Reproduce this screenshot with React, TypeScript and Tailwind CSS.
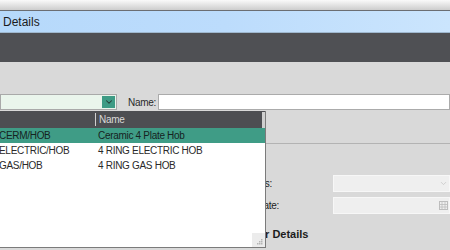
import React from "react";
import { ChevronDown } from "lucide-react";

const rows = [
  { code: "CERM/HOB", name: "Ceramic 4 Plate Hob", selected: true },
  { code: "ELECTRIC/HOB", name: "4 RING ELECTRIC HOB", selected: false },
  { code: "GAS/HOB", name: "4 RING GAS HOB", selected: false },
];

const CalendarIcon = () => (
  <svg width="9" height="9" viewBox="0 0 9 9" className="text-[#bdbdbd]">
    <rect x="0.5" y="0.5" width="8" height="8" fill="none" stroke="currentColor" />
    <path d="M0.5 3.5h8M0.5 6h8M3 0.5v8M6 0.5v8" stroke="currentColor" strokeWidth="0.8" />
  </svg>
);

const App: React.FC = () => {
  return (
    <div className="relative w-[450px] h-[250px] overflow-hidden bg-[#d9d9d9] font-['Liberation_Sans',Arial,sans-serif] text-[10px] tracking-[-0.3px] text-[#222]">
      {/* window chrome */}
      <div className="h-[10px] bg-gradient-to-b from-[#fafafa] to-[#cdcdcd]" />
      <div className="h-[1px] bg-[#6b6e73]" />
      <div className="h-[22px] flex items-center pl-[3px] bg-gradient-to-r from-[#b6d9fb] via-[#bcdcfc] to-[#cbe5fd] border-b border-[#9fb8cf] text-[12px] tracking-normal text-[#1b1b1b]">
        Details
      </div>
      <div className="h-[29px] bg-[#4f5054]" />

      {/* form */}
      <div className="pt-[32px]">
        <div className="flex items-center h-[16px]">
          <div className="w-[117px] shrink-0 h-full bg-[#eaf5ec] border border-[#a9a9a9] flex items-center justify-end pr-[1px]">
            <div className="w-[13px] h-[12px] bg-[#3e9b85] flex items-center justify-center">
              <ChevronDown size={10} strokeWidth={2.5} className="text-[#253b35]" />
            </div>
          </div>
          <span className="ml-[11px] w-[30px] shrink-0 whitespace-nowrap text-[#2a2a2a]">Name:</span>
          <div className="flex-1 h-full bg-white border border-[#ababab]" />
        </div>

        <div className="ml-[266px] mt-[33px] border-t border-[#b3b3b3]" />

        <div className="mt-[31px] flex flex-col gap-[5px]">
          <div className="flex items-center h-[17px]">
            <span className="w-[333px] shrink-0 whitespace-nowrap pl-[243px]">Status:</span>
            <div className="flex-1 h-full bg-[#efefef] border border-[#f7f7f7] flex items-center justify-end pr-[1px]">
              <ChevronDown size={9} className="text-[#c4c4c4]" />
            </div>
          </div>
          <div className="flex items-center h-[17px]">
            <span className="w-[333px] shrink-0 whitespace-nowrap pl-[230px]">Install Date:</span>
            <div className="flex-1 h-full bg-[#efefef] border border-[#f7f7f7] flex items-center justify-end pr-[1px]">
              <CalendarIcon />
            </div>
          </div>
        </div>

        <div className="mt-[12px] pl-[218px] text-[11px] tracking-normal font-bold text-[#1c1c1c]">Customer Details</div>
      </div>

      {/* open dropdown list */}
      <div className="absolute left-0 top-[111px] w-[266px] h-[137px] bg-white border-r border-b border-[#7b7b7b] flex flex-col">
        <div className="h-[17px] bg-[#4d4e52] flex items-center text-[#d9d9d9]">
          <div className="w-[95px]" />
          <div className="w-[1px] h-[13px] bg-[#cfcfcf]" />
          <span className="ml-[3px]">Name</span>
          <div className="ml-auto w-[3px] h-[16px] bg-[#cfcfcf]" />
        </div>
        {rows.map((r) => (
          <div
            key={r.code}
            className={`h-[15px] flex items-center ${r.selected ? "bg-[#3f9c86] text-[#16231f]" : "bg-white text-[#2a2a2a]"}`}
          >
            <span className="w-[99px] -ml-[1px] whitespace-nowrap overflow-hidden">{r.code}</span>
            <span className="whitespace-nowrap">{r.name}</span>
          </div>
        ))}
        <div className="mt-auto self-end w-[13px] h-[14px] bg-[#ececec] flex items-end justify-end p-[2px]">
          <svg width="6" height="6" viewBox="0 0 6 6">
            <rect x="4" y="0" width="1.5" height="1.5" fill="#b5b5b5" />
            <rect x="2" y="2" width="1.5" height="1.5" fill="#b5b5b5" />
            <rect x="4" y="2" width="1.5" height="1.5" fill="#b5b5b5" />
            <rect x="0" y="4" width="1.5" height="1.5" fill="#b5b5b5" />
            <rect x="2" y="4" width="1.5" height="1.5" fill="#b5b5b5" />
            <rect x="4" y="4" width="1.5" height="1.5" fill="#b5b5b5" />
          </svg>
        </div>
      </div>
    </div>
  );
};

export default App;
